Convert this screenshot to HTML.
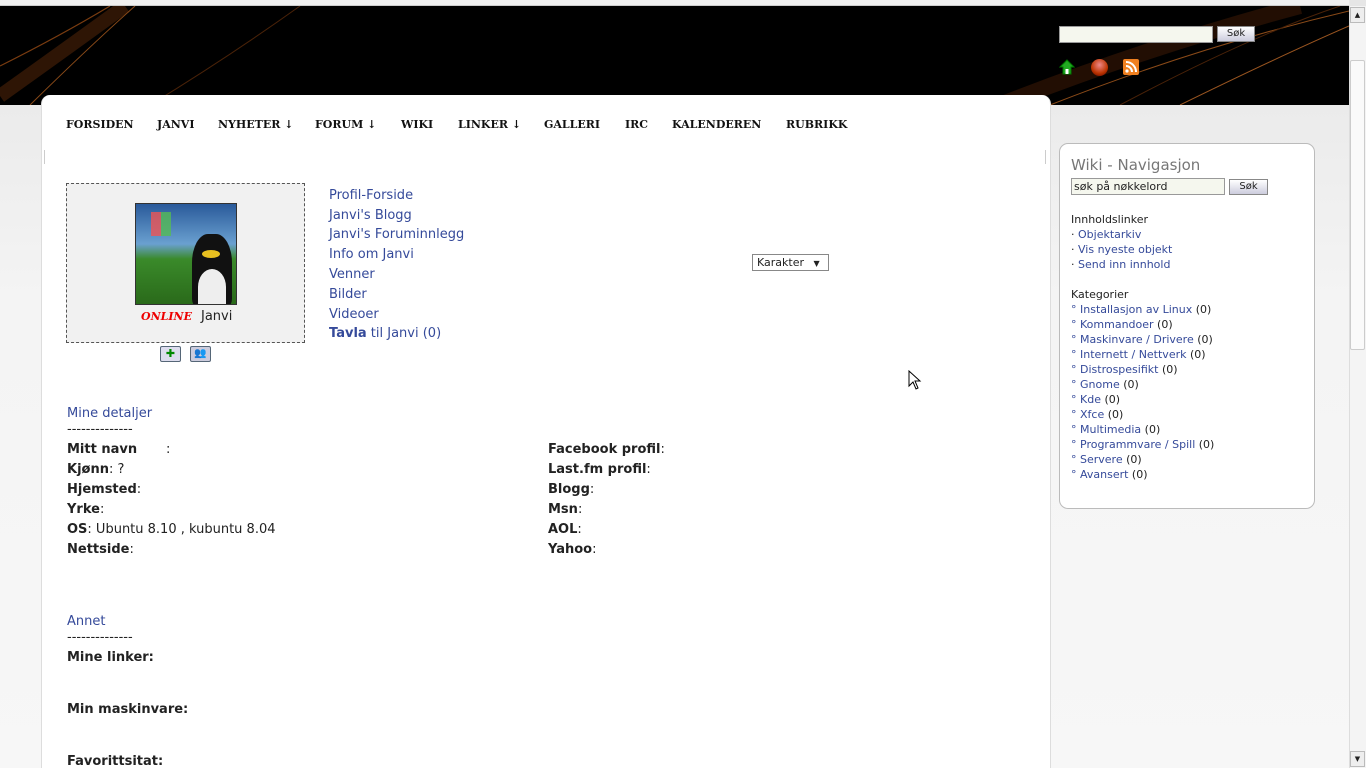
<!DOCTYPE html>
<html><head><meta charset="utf-8"><style>
*{margin:0;padding:0;box-sizing:border-box}
html,body{width:1366px;height:768px;overflow:hidden}
body{position:relative;font-family:"DejaVu Sans","Liberation Sans",sans-serif;font-size:13px;color:#222;background:linear-gradient(180deg,#e6e6e6 0,#f4f4f4 300px,#f7f7f7 768px)}
.a{position:absolute;white-space:nowrap}
a{color:#354a9a;text-decoration:none}
#top{left:0;top:0;width:1349px;height:6px;background:#f0f0f0;border-bottom:1px solid #ccc}
#hdr{left:0;top:6px;width:1349px;height:99px;background:#000;overflow:hidden}
#main{left:41px;top:95px;width:1010px;height:673px;background:#fff;border-radius:9px 9px 0 0;border-left:1px solid #ddd;border-right:1px solid #ddd}
.nav{top:118px;font-family:"DejaVu Serif","Liberation Serif",serif;font-weight:bold;font-size:11px;color:#111}
.box{left:66px;top:183px;width:239px;height:160px;background:#f1f1f1;border:1px dashed #555}
.links{left:329px;font-size:13px}
#side{left:1059px;top:143px;width:256px;height:366px;background:#fff;border:1px solid #bbb;border-radius:9px}
.s{font-size:11px;color:#222}
#sb{left:1349px;top:6px;width:17px;height:762px;background:#f4f4f4;border-left:1px solid #ddd}
</style></head><body>
<div class="a" id="top"></div>
<div class="a" id="hdr">
<svg width="1349" height="99" style="position:absolute;left:0;top:0">
<path d="M0 90 Q70 40 125 0" stroke="#3a1a06" stroke-width="14" fill="none" opacity=".8"/>
<path d="M0 60 Q60 30 110 0" stroke="#7a3c10" stroke-width="1.2" fill="none"/>
<path d="M30 99 Q90 40 135 0" stroke="#8a4a18" stroke-width="1" fill="none"/>
<path d="M150 99 Q230 50 300 0" stroke="#4a2208" stroke-width="1" fill="none"/>
<path d="M1000 99 Q1150 40 1300 0" stroke="#2a1204" stroke-width="16" fill="none" opacity=".8"/>
<path d="M1050 99 Q1200 40 1349 5" stroke="#8a4a18" stroke-width="1" fill="none"/>
<path d="M1180 99 Q1280 50 1349 20" stroke="#9a5520" stroke-width="1" fill="none"/>
<path d="M1120 99 Q1250 30 1340 0" stroke="#4a2208" stroke-width="1" fill="none"/>
</svg>
<div class="a" style="left:1059px;top:20px;width:154px;height:17px;background:#f5f7ee;border:1px solid #999"></div>
<div class="a" style="left:1217px;top:20px;width:38px;height:16px;background:linear-gradient(#fff,#ccd);border:1px solid #888;font-size:10px;text-align:center;line-height:14px">Søk</div>
<svg class="a" style="left:1059px;top:53px" width="16" height="16"><path d="M8 1 L15 8 H12 V15 H4 V8 H1Z" fill="#2a2" stroke="#070" /><rect x="6.5" y="10" width="3" height="5" fill="#fff"/></svg>
<div class="a" style="left:1091px;top:53px;width:17px;height:17px;border-radius:50%;background:radial-gradient(circle at 50% 35%,#e88,#b30 60%,#500)"></div>
<div class="a" style="left:1123px;top:53px;width:16px;height:16px;border-radius:2px;background:#f08020"><svg width="16" height="16"><circle cx="4" cy="12" r="1.6" fill="#fff"/><path d="M3 7a6 6 0 0 1 6 6M3 3a10 10 0 0 1 10 10" stroke="#fff" stroke-width="2" fill="none"/></svg></div>
</div>
<div class="a" id="main"></div>
<div class="a" style="left:44px;top:150px;width:1px;height:14px;background:#ccc"></div>
<div class="a" style="left:1045px;top:150px;width:1px;height:14px;background:#ccc"></div>
<div class="a nav" style="left:66px">FORSIDEN</div>
<div class="a nav" style="left:157px">JANVI</div>
<div class="a nav" style="left:218px">NYHETER ↓</div>
<div class="a nav" style="left:315px">FORUM ↓</div>
<div class="a nav" style="left:401px">WIKI</div>
<div class="a nav" style="left:458px">LINKER ↓</div>
<div class="a nav" style="left:544px">GALLERI</div>
<div class="a nav" style="left:625px">IRC</div>
<div class="a nav" style="left:672px">KALENDEREN</div>
<div class="a nav" style="left:786px">RUBRIKK</div>

<div class="a box"></div>
<div class="a" style="left:135px;top:203px;width:102px;height:102px;border:1px solid #333;background:linear-gradient(180deg,#2a5a9a 0,#6aa0d0 40%,#3a8a2a 55%,#2a6a1a 100%);overflow:hidden">
<div style="position:absolute;left:56px;top:30px;width:40px;height:72px;border-radius:40% 40% 10% 10%;background:#111"></div>
<div style="position:absolute;left:62px;top:65px;width:28px;height:36px;border-radius:50% 50% 0 0;background:#eee"></div>
<div style="position:absolute;left:66px;top:46px;width:18px;height:8px;border-radius:50%;background:#e8c020"></div>
<div style="position:absolute;left:15px;top:8px;width:20px;height:24px;background:linear-gradient(90deg,#e55 50%,#5b5 50%);opacity:.8"></div>
</div>
<div class="a" style="left:141px;top:310px;font-family:'DejaVu Serif',serif;font-style:italic;font-size:11px;color:#e00;font-weight:bold">ONLINE</div>
<div class="a" style="left:201px;top:309px;font-size:13px">Janvi</div>
<div class="a" style="left:160px;top:346px;width:21px;height:16px;border:1px solid #567;border-radius:2px;background:#dde;text-align:center;font-size:11px;line-height:14px;color:#080;font-weight:bold">✚</div>
<div class="a" style="left:190px;top:346px;width:21px;height:16px;border:1px solid #567;border-radius:2px;background:#ccd;text-align:center;font-size:10px;line-height:14px">👥</div>

<div class="a links" style="top:188px"><a>Profil-Forside</a></div>
<div class="a links" style="top:208px"><a>Janvi's Blogg</a></div>
<div class="a links" style="top:227px"><a>Janvi's Foruminnlegg</a></div>
<div class="a links" style="top:247px"><a>Info om Janvi</a></div>
<div class="a links" style="top:267px"><a>Venner</a></div>
<div class="a links" style="top:287px"><a>Bilder</a></div>
<div class="a links" style="top:307px"><a>Videoer</a></div>
<div class="a links" style="top:326px"><a><b>Tavla</b> til Janvi (0)</a></div>
<div class="a" style="left:752px;top:254px;width:77px;height:17px;border:1px solid #888;background:#fff;font-size:11px;line-height:15px;padding-left:4px">Karakter <span style="font-size:8px;margin-left:6px">▼</span></div>
<svg class="a" style="left:908px;top:370px" width="14" height="20"><path d="M1 1 V16 L5 12 L8 19 L10 18 L7 11 H12Z" fill="#fff" stroke="#000"/></svg>

<div class="a" style="left:67px;top:406px"><a>Mine detaljer</a></div>
<div class="a" style="left:67px;top:422px">--------------</div>
<div class="a" style="left:67px;top:442px"><b>Mitt navn</b> &nbsp; &nbsp; &nbsp; :</div>
<div class="a" style="left:67px;top:462px"><b>Kjønn</b>: ?</div>
<div class="a" style="left:67px;top:482px"><b>Hjemsted</b>:</div>
<div class="a" style="left:67px;top:502px"><b>Yrke</b>:</div>
<div class="a" style="left:67px;top:522px"><b>OS</b>: Ubuntu 8.10 , kubuntu 8.04</div>
<div class="a" style="left:67px;top:542px"><b>Nettside</b>:</div>
<div class="a" style="left:548px;top:442px"><b>Facebook profil</b>:</div>
<div class="a" style="left:548px;top:462px"><b>Last.fm profil</b>:</div>
<div class="a" style="left:548px;top:482px"><b>Blogg</b>:</div>
<div class="a" style="left:548px;top:502px"><b>Msn</b>:</div>
<div class="a" style="left:548px;top:522px"><b>AOL</b>:</div>
<div class="a" style="left:548px;top:542px"><b>Yahoo</b>:</div>
<div class="a" style="left:67px;top:614px"><a>Annet</a></div>
<div class="a" style="left:67px;top:630px">--------------</div>
<div class="a" style="left:67px;top:650px"><b>Mine linker:</b></div>
<div class="a" style="left:67px;top:702px"><b>Min maskinvare:</b></div>
<div class="a" style="left:67px;top:754px"><b>Favorittsitat:</b></div>

<div class="a" id="side"></div>
<div class="a" style="left:1071px;top:156px;font-size:15px;color:#777">Wiki - Navigasjon</div>
<div class="a" style="left:1071px;top:178px;width:154px;height:17px;background:#f5f7ee;border:1px solid #999;font-size:11px;line-height:15px;padding-left:2px">søk på nøkkelord</div>
<div class="a" style="left:1229px;top:179px;width:39px;height:16px;background:linear-gradient(#fff,#ccd);border:1px solid #888;font-size:10px;text-align:center;line-height:14px">Søk</div>
<div class="a s" style="left:1071px;top:213px">Innholdslinker</div>
<div class="a s" style="left:1071px;top:228px">· <a>Objektarkiv</a></div>
<div class="a s" style="left:1071px;top:243px">· <a>Vis nyeste objekt</a></div>
<div class="a s" style="left:1071px;top:258px">· <a>Send inn innhold</a></div>
<div class="a s" style="left:1071px;top:288px">Kategorier</div>
<div class="a s" style="left:1071px;top:302px;line-height:15px"><span style="color:#354a9a">°</span> <a>Installasjon av Linux</a> (0)<br><span style="color:#354a9a">°</span> <a>Kommandoer</a> (0)<br><span style="color:#354a9a">°</span> <a>Maskinvare / Drivere</a> (0)<br><span style="color:#354a9a">°</span> <a>Internett / Nettverk</a> (0)<br><span style="color:#354a9a">°</span> <a>Distrospesifikt</a> (0)<br><span style="color:#354a9a">°</span> <a>Gnome</a> (0)<br><span style="color:#354a9a">°</span> <a>Kde</a> (0)<br><span style="color:#354a9a">°</span> <a>Xfce</a> (0)<br><span style="color:#354a9a">°</span> <a>Multimedia</a> (0)<br><span style="color:#354a9a">°</span> <a>Programmvare / Spill</a> (0)<br><span style="color:#354a9a">°</span> <a>Servere</a> (0)<br><span style="color:#354a9a">°</span> <a>Avansert</a> (0)</div>

<div class="a" id="sb"></div>
<div class="a" style="left:1350px;top:7px;width:15px;height:16px;background:#eee;border:1px solid #bbb;font-size:7px;text-align:center;line-height:14px">▲</div>
<div class="a" style="left:1350px;top:60px;width:15px;height:290px;background:#fafafa;border:1px solid #ccc;border-radius:2px"></div>
<div class="a" style="left:1350px;top:751px;width:15px;height:16px;background:#eee;border:1px solid #bbb;font-size:7px;text-align:center;line-height:14px">▼</div>
</body></html>
